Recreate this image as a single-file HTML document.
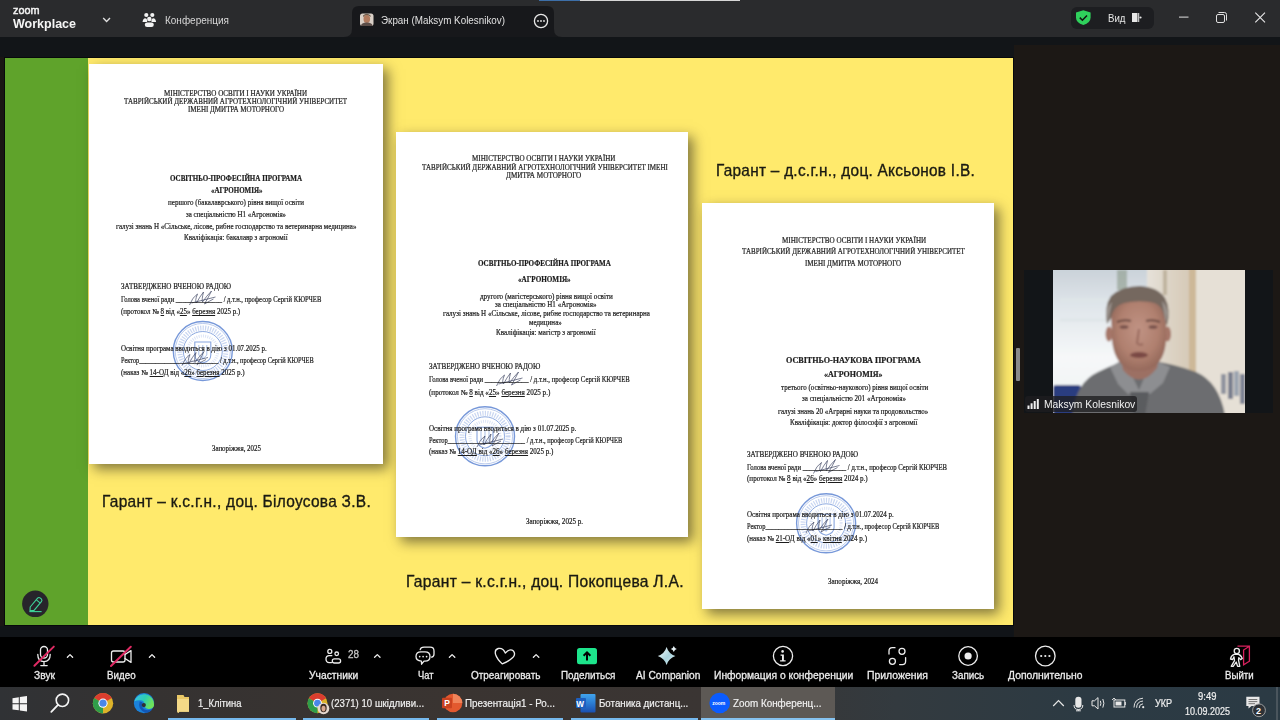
<!DOCTYPE html>
<html><head><meta charset="utf-8">
<style>
*{margin:0;padding:0;box-sizing:border-box}
html,body{width:1280px;height:720px;overflow:hidden;background:#121518;font-family:"Liberation Sans",sans-serif}
.a{position:absolute}
.t{position:absolute;white-space:pre;line-height:1;transform-origin:0 0}
.t u{text-decoration-thickness:1px;text-underline-offset:1px}
svg{position:absolute;overflow:visible}
.doc{position:absolute;background:#fff;box-shadow:5px 5px 12px rgba(45,42,30,.6)}
</style></head><body>
<!-- title bar -->
<div class="a" style="left:0;top:0;width:1280px;height:37px;background:#2a2b2d"></div>
<div class="a" style="left:539px;top:0;width:41px;height:1px;background:#3d6fa8"></div>
<div class="a" style="left:580px;top:0;width:160px;height:1px;background:#d6d6d6"></div>
<svg style="left:0;top:0" width="1280" height="37">
  <!-- chevron -->
  <path d="M103.2 18 L106.6 21.4 L110 18" fill="none" stroke="#e0e0e0" stroke-width="1.4"/>
  <!-- people icon -->
  <g fill="#f2f2f2">
    <circle cx="146.3" cy="15" r="2.1"/>
    <circle cx="152.3" cy="15" r="2.1"/>
    <circle cx="149.3" cy="19" r="2.2"/>
    <path d="M142.5 21.9 Q143 18.5 145.2 18.2 Q146.7 18.2 147.3 20.3 L147 21.9 Z"/>
    <path d="M156.1 21.9 Q155.6 18.5 153.4 18.2 Q151.9 18.2 151.3 20.3 L151.6 21.9 Z"/>
    <rect x="144.8" y="22.4" width="9" height="4.6" rx="2.3"/>
  </g>
  <!-- tab -->
  <path d="M344 37 Q352 37 352 29 L352 13 Q352 6 359 6 L547 6 Q554 6 554 13 L554 29 Q554 37 562 37 Z" fill="#17181b"/>
  <!-- avatar -->
  <rect x="360" y="13.5" width="13.5" height="12.5" rx="2.5" fill="#d9cfc6"/>
  <ellipse cx="366.8" cy="19" rx="3.3" ry="4" fill="#b07a5e"/>
  <path d="M363 17 Q366.8 12.8 370.6 17 L370.6 15.5 Q366.8 12 363 15.5Z" fill="#6d5a4a"/>
  <path d="M361 26 Q361 22.5 366.8 22.5 Q372.5 22.5 372.5 26Z" fill="#5b4d48"/>
  <!-- more -->
  <circle cx="541" cy="21" r="6.6" fill="none" stroke="#e8e8e8" stroke-width="1.3"/>
  <circle cx="538" cy="21" r="0.9" fill="#e8e8e8"/><circle cx="541" cy="21" r="0.9" fill="#e8e8e8"/><circle cx="544" cy="21" r="0.9" fill="#e8e8e8"/>
  <!-- pill -->
  <rect x="1071" y="7" width="83" height="22" rx="6" fill="#1d1e21"/>
  <path d="M1083.3 10.3 L1090.6 12.6 L1090.6 17.5 Q1090.6 22.8 1083.3 25 Q1076 22.8 1076 17.5 L1076 12.6 Z" fill="#2fd05c"/>
  <path d="M1079.8 17.6 L1082.4 20.2 L1087 15.4" fill="none" stroke="#111" stroke-width="1.5"/>
  <rect x="1132" y="13" width="5.5" height="9" fill="#e8e8e8"/>
  <rect x="1138.2" y="13" width="1" height="9" fill="#e8e8e8"/>
  <circle cx="1140.5" cy="17.5" r="1.1" fill="#e8e8e8"/>
  <!-- window controls -->
  <rect x="1179" y="16.6" width="9.5" height="1" fill="#e0e0e0"/>
  <rect x="1216.5" y="14.5" width="8" height="8" rx="1.5" fill="none" stroke="#e0e0e0" stroke-width="1"/>
  <path d="M1218.5 12.5 L1224.5 12.5 Q1226.5 12.5 1226.5 14.5 L1226.5 20.5" fill="none" stroke="#e0e0e0" stroke-width="1"/>
  <path d="M1255.3 12.6 L1265 22.3 M1265 12.6 L1255.3 22.3" stroke="#e8e8e8" stroke-width="1.1"/>
</svg>

<!-- content background -->
<div class="a" style="left:4px;top:57px;width:1010px;height:569px;background:#07090b"></div>
<div class="a" style="left:0;top:57px;width:4px;height:580px;background:#1a1614"></div>
<div class="a" style="left:1014px;top:45px;width:266px;height:592px;background:#1c1815"></div>

<!-- slide -->
<div class="a" style="left:5px;top:58px;width:1008px;height:567px;background:#ffea6c;overflow:hidden">
  <div class="a" style="left:0;top:0;width:83px;height:567px;background:#5fa32b"></div>
  <div class="doc" style="left:84px;top:6px;width:294px;height:400px"></div>
  <div class="doc" style="left:391px;top:74px;width:292px;height:405px"></div>
  <div class="doc" style="left:697px;top:145px;width:292px;height:406px"></div>
</div>
<svg style="left:0;top:0" width="1280" height="720">
  <defs>
    <g id="stamp">
      <circle r="29.5" fill="none" stroke="#5f86d2" stroke-width="1.4" opacity=".85"/>
      <circle r="27.6" fill="none" stroke="#6f92d8" stroke-width=".6" opacity=".8"/>
      <circle r="23" fill="none" stroke="#7899dc" stroke-width="5" stroke-dasharray="1.2 1.3" opacity=".4"/>
      <circle r="19.5" fill="none" stroke="#6a8fd6" stroke-width=".9" opacity=".85"/>
      <circle r="15" fill="none" stroke="#8aa6e0" stroke-width="3" stroke-dasharray="1 1.2" opacity=".3"/>
      <path d="M-8 -9 L8 -9 L8 4 Q8 10 0 12 Q-8 10 -8 4 Z" fill="none" stroke="#6a8fd6" stroke-width="1.1" opacity=".8"/>
      <path d="M-4 -6 L-4 4 L0 8 L4 4 L4 -6 M0 -6 L0 8" fill="none" stroke="#6a8fd6" stroke-width=".8" opacity=".7"/>
    </g>
    <path id="sig" d="M0 14 Q3 6 8 3 Q5 10 7 12 Q10 6 14 1 Q12 9 13 11 Q17 5 22 0 Q18 8 15 13 Q20 10 24 8 M2 12 L26 6" fill="none" stroke="#3c4260" stroke-width=".8" opacity=".85"/>
  </defs>
  <use href="#stamp" transform="translate(202.8,351)"/>
  <use href="#stamp" transform="translate(485,436.3)"/>
  <use href="#stamp" transform="translate(826.1,523.3)"/>
  <use href="#sig" transform="translate(189.5,291)"/>
  <use href="#sig" transform="translate(182,351.5)"/>
  <use href="#sig" transform="translate(496.5,372)"/>
  <use href="#sig" transform="translate(477,433)"/>
  <use href="#sig" transform="translate(813.5,459.5)"/>
  <use href="#sig" transform="translate(806,519)"/>
</svg>
<!-- pencil button -->
<svg style="left:0;top:0" width="100" height="637">
  <circle cx="35.3" cy="603.8" r="13.2" fill="#27252b"/>
  <path d="M30.2 607 L37.6 598.2 Q38.8 596.8 40.4 598.1 L41.3 598.9 Q42.6 600.2 41.4 601.6 L34 610.4 L30 610.9 Z" fill="none" stroke="#3fd49a" stroke-width="1.1"/>
  <path d="M36.4 599.8 L40 602.9" stroke="#3fd49a" stroke-width="1.1"/>
  <path d="M29.5 611.6 L41.6 611.6" stroke="#3fd49a" stroke-width="1.1"/>
</svg>

<!-- video tile -->
<div class="a" style="left:1016px;top:347.5px;width:3.5px;height:33.5px;background:#8a8a8a;border-radius:1px"></div>
<div class="a" style="left:1024px;top:270px;width:249px;height:143px;background:#121518"></div>
<svg style="left:1053px;top:270px;overflow:hidden" width="192" height="143" viewBox="1053 270 192 143">
  <defs>
    <filter id="bl" x="-5%" y="-5%" width="110%" height="110%"><feGaussianBlur stdDeviation="1.2"/></filter>
    <linearGradient id="win" x1="0" y1="0" x2="0" y2="1"><stop offset="0" stop-color="#c9d1d8"/><stop offset=".25" stop-color="#dfe5ea"/><stop offset=".6" stop-color="#f6f8f9"/><stop offset="1" stop-color="#eef1f2"/></linearGradient>
    <linearGradient id="cur" x1="0" y1="0" x2="1" y2="0"><stop offset="0" stop-color="#e6e2da"/><stop offset=".5" stop-color="#ddd4c6"/><stop offset="1" stop-color="#d6cab7"/></linearGradient>
    <radialGradient id="face" cx=".5" cy=".45" r=".6"><stop offset="0" stop-color="#c09384"/><stop offset=".6" stop-color="#b0806f"/><stop offset="1" stop-color="#8f6457"/></radialGradient>
  </defs>
  <g filter="url(#bl)">
    <rect x="1050" y="267" width="200" height="150" fill="#e5dfd5"/>
    <rect x="1050" y="267" width="97" height="150" fill="url(#win)"/>
    <rect x="1147" y="267" width="43" height="150" fill="url(#cur)"/>
    <rect x="1189" y="267" width="7" height="150" fill="#cdb898"/>
    <rect x="1196" y="267" width="52" height="150" fill="#e6e0d6"/>
    <rect x="1163" y="270" width="4" height="25" fill="#c0b49f"/>
    <path d="M1060 300 L1140 300 M1060 320 L1140 320" stroke="#dfe5e8" stroke-width="3"/>
    <rect x="1117" y="270" width="10" height="20" fill="#8a9a88" opacity=".6"/>
    <!-- bottles -->
    <rect x="1221" y="374" width="5" height="20" fill="#6b7488" opacity=".7"/>
    <rect x="1228" y="372" width="5" height="27" fill="#4a5570" opacity=".7"/>
    <rect x="1234" y="371" width="5" height="25" fill="#7a8aa0" opacity=".7"/>
    <rect x="1240" y="374" width="5" height="30" fill="#505a76" opacity=".7"/>
    <!-- chair -->
    <rect x="1053" y="385" width="28" height="30" rx="3" fill="#2c3c80"/>
    <!-- body -->
    <path d="M1072 415 Q1076 382 1098 372 Q1114 364 1124 362 L1152 361 Q1175 364 1196 372 Q1219 382 1225 415 Z" fill="#6c6d70"/>
    <path d="M1110 367 L1124 359 L1139 390 L1152 359 L1170 367 L1163 383 L1150 394 L1128 394 L1118 384 Z" fill="#8d8e91"/>
    <path d="M1130 392 L1149 392 L1145 415 L1134 415 Z" fill="#5a5b5e"/>
    <!-- neck -->
    <path d="M1120 352 L1160 352 L1157 368 Q1140 390 1123 370 Z" fill="#9c7063"/>
    <!-- ears -->
    <ellipse cx="1109" cy="334" rx="3.5" ry="7.5" fill="#a67668"/>
    <ellipse cx="1167.5" cy="334" rx="3.5" ry="7.5" fill="#a67668"/>
    <!-- face -->
    <path d="M1111 312 Q1112 297 1138 296 Q1165 297 1166 314 L1166 340 Q1165 362 1150 369 Q1139 373 1128 369 Q1114 362 1112 340 Z" fill="url(#face)"/>
    <!-- hair -->
    <path d="M1107 324 Q1104 306 1111 296 Q1122 286 1140 286 Q1158 287 1165 298 Q1171 309 1167 326 L1163 312 Q1160 303 1150 302 Q1136 300 1124 303 Q1113 306 1111 318 Z" fill="#74675e"/>
    <path d="M1108 322 L1106 312 Q1108 305 1112 302 Z M1166 324 L1168 312 Q1166 304 1162 301 Z" fill="#9a928c"/>
    <!-- eyes/brows -->
    <path d="M1117 322 Q1124 319 1131 321 M1146 321 Q1153 319 1160 322" stroke="#6a4a42" stroke-width="2" fill="none"/>
    <ellipse cx="1124" cy="327" rx="4.5" ry="1.8" fill="#76504a"/>
    <ellipse cx="1153" cy="327" rx="4.5" ry="1.8" fill="#76504a"/>
    <path d="M1139 329 L1137 343 Q1139 346 1143 344" stroke="#996a5e" stroke-width="2" fill="none"/>
    <ellipse cx="1139" cy="355" rx="9" ry="3" fill="#7a4a45"/>
  </g>
</svg>
<!-- name label -->
<div class="a" style="left:1025px;top:396px;width:112px;height:16px;background:rgba(30,30,32,.78);border-radius:3px"></div>
<svg style="left:0;top:0" width="1280" height="720">
  <g fill="#f0f0f0">
    <rect x="1027.5" y="405.5" width="2" height="3.5"/>
    <rect x="1030.6" y="403.3" width="2" height="5.7"/>
    <rect x="1033.7" y="401" width="2" height="8"/>
    <rect x="1036.8" y="399" width="2" height="10"/>
  </g>
</svg>

<!-- toolbar -->
<div class="a" style="left:0;top:626px;width:1013px;height:11px;background:#111418"></div>
<div class="a" style="left:0;top:637px;width:1280px;height:50px;background:#000"></div>
<svg style="left:0;top:637px" width="1280" height="50">
  <g fill="none" stroke="#ededed" stroke-width="1.3" stroke-linecap="round" stroke-linejoin="round">
    <!-- mic -->
    <rect x="40.5" y="9.5" width="7" height="11.5" rx="3.5"/>
    <path d="M37.8 17.5 Q37.8 24.6 44 24.6 Q50.2 24.6 50.2 17.5 M44 24.6 L44 28.6 M40.8 28.6 L47.2 28.6"/>
    <!-- video -->
    <rect x="111.5" y="14" width="13.5" height="11" rx="2"/>
    <path d="M125 17.5 L131 13.6 L131 25.4 L125 21.5"/>
    <!-- carets -->
    <path d="M67.4 20.3 L70 17.6 L72.6 20.3 M149.4 20.3 L152 17.6 L154.6 20.3 M374.6 20.3 L377.3 17.6 L380 20.3 M449.4 20.3 L452.1 17.6 L454.8 20.3 M533.4 20.3 L536.1 17.6 L538.8 20.3"/>
    <!-- participants -->
    <circle cx="329.8" cy="14.4" r="2"/>
    <circle cx="336.7" cy="16.8" r="1.8"/>
    <path d="M331.8 18.7 L329.2 18.7 Q326 18.7 326 22.1 Q326 25.6 329.2 25.6 L331.6 25.6"/>
    <rect x="332.3" y="21.9" width="8.3" height="4.1" rx="2.05"/>
    <!-- chat -->
    <path d="M420.2 12.6 Q420.6 10.2 424 10.2 L430.2 10.2 Q434 10.2 434 14 L434 17.2 Q434 19.6 431.6 20.2"/>
    <path d="M421 14.8 L425 14.8 Q430 14.8 430 19.5 Q430 24.2 425 24.2 L424 24.2 L421.6 27.2 L421.4 24.1 Q416 23.6 416 19.5 Q416 14.8 421 14.8 Z"/>
    <!-- heart -->
    <path d="M505.3 16 Q503 10.5 498.2 11.5 Q494.3 12.6 495.6 17.5 Q497 22 502.2 26.9 Q508.5 24.6 512.8 20.6 Q516 17.2 513.4 14 Q510 11 505.3 16 Z"/>
    <!-- info -->
    <circle cx="783" cy="19" r="9.6"/>
    <!-- apps -->
    <path d="M889 17 L889 14 Q889 10.7 892.3 10.7 L895 10.7 M905.6 20.6 L905.6 24.3 Q905.6 27.6 902.3 27.6 L899.6 27.6"/>
    <circle cx="902" cy="14.3" r="3"/>
    <circle cx="892.4" cy="24.3" r="3"/>
    <!-- record -->
    <circle cx="968.1" cy="19" r="9.3"/>
    <!-- more -->
    <circle cx="1045.3" cy="19" r="9.8"/>
    <!-- exit person -->
    <circle cx="1236.8" cy="14" r="2.6"/>
    <path d="M1234.2 17.4 Q1231 18.5 1230.5 22 L1232.6 22.5 L1234 19.8 L1234.5 23.7 L1231.2 29.3 L1233.2 29.3 L1236.2 25 L1237.6 29.3 L1239.8 29.3 L1238.5 23 L1238.8 20.6 L1240.6 22.6 L1242.3 21.4 Q1240.5 17.3 1236.8 17 Z"/>
  </g>
  <!-- red slashes -->
  <path d="M34.4 28.8 L53.8 9.6 M111 29 L130.8 9.8" stroke="#df2a63" stroke-width="2" stroke-linecap="round"/>
  <!-- info i -->
  <g fill="#ededed">
    <circle cx="782.6" cy="14.4" r="1.3"/>
    <path d="M780.6 17.4 L783.9 17.4 L783.9 23.2 L785.6 23.2 L785.6 24.6 L780.1 24.6 L780.1 23.2 L782 23.2 L782 18.7 L780.6 18.7 Z"/>
    <circle cx="968.1" cy="19" r="3.6"/>
    <circle cx="1041.2" cy="19" r="1.1"/><circle cx="1045.3" cy="19" r="1.1"/><circle cx="1049.4" cy="19" r="1.1"/>
    <circle cx="426.6" cy="19.6" r="0.85"/><circle cx="423.1" cy="19.6" r="0.85"/><circle cx="419.7" cy="19.6" r="0.85"/>
  </g>
  <!-- share -->
  <rect x="577" y="11" width="20" height="16.2" rx="2.5" fill="#1de58c"/>
  <path d="M587 23.4 L587 16 M583.6 18.8 L587 15.4 L590.4 18.8" fill="none" stroke="#000" stroke-width="2"/>
  <!-- AI star -->
  <defs><linearGradient id="ai" x1="0" y1="0" x2="1" y2="1"><stop offset="0" stop-color="#ffffff"/><stop offset=".55" stop-color="#a9d3dd"/><stop offset="1" stop-color="#e0f0f4"/></linearGradient></defs>
  <path d="M666.6 9.9 Q668.6 16.6 675.4 19 Q668.6 21.4 666.6 28 Q664.6 21.4 657.8 19 Q664.6 16.6 666.6 9.9 Z" fill="url(#ai)"/>
  <path d="M673.8 9 Q674.6 11.3 676.8 12 Q674.6 12.7 673.8 15 Q673 12.7 670.8 12 Q673 11.3 673.8 9 Z" fill="#e8f3f7"/>
  <!-- exit door -->
  <path d="M1237.5 9.2 L1249.4 9.2 L1249.4 24.2 L1243.6 27.8 L1243.6 13 L1249.4 9.2" fill="none" stroke="#d8215d" stroke-width="1.3"/>
</svg>

<!-- taskbar -->
<div class="a" style="left:0;top:687px;width:1280px;height:33px;background:linear-gradient(90deg,#303235 0%,#353231 12%,#3a3431 35%,#3a3533 55%,#333a3f 70%,#2c3a43 85%,#2b3a44 100%)"></div>
<div class="a" style="left:701px;top:687px;width:134px;height:33px;background:#5d5955"></div>
<div class="a" style="left:168px;top:717.8px;width:127.6px;height:2.2px;background:#76b9ed"></div>
<div class="a" style="left:302.5px;top:717.8px;width:126.3px;height:2.2px;background:#76b9ed"></div>
<div class="a" style="left:437px;top:717.8px;width:126px;height:2.2px;background:#76b9ed"></div>
<div class="a" style="left:571px;top:717.8px;width:126.5px;height:2.2px;background:#76b9ed"></div>
<div class="a" style="left:701px;top:717.8px;width:134px;height:2.2px;background:#86c3f0"></div>
<svg style="left:0;top:687px" width="1280" height="33">
  <!-- windows logo -->
  <g fill="#f4f4f4">
    <path d="M12.5 11.2 L18.8 10.3 L18.8 16.3 L12.5 16.3Z"/>
    <path d="M19.8 10.1 L27 9 L27 16.3 L19.8 16.3Z"/>
    <path d="M12.5 17.3 L18.8 17.3 L18.8 23.3 L12.5 22.4Z"/>
    <path d="M19.8 17.3 L27 17.3 L27 24.4 L19.8 23.5Z"/>
  </g>
  <!-- search -->
  <circle cx="62.4" cy="13.3" r="6.2" fill="none" stroke="#f4f4f4" stroke-width="1.6"/>
  <path d="M58 17.8 L51.3 24.8" stroke="#f4f4f4" stroke-width="1.8" stroke-linecap="round"/>
  <!-- chrome -->
  <g transform="translate(103,16.2)">
    <circle r="10.2" fill="#ddb32a"/>
    <path d="M0 0 L-8.8 -5.1 A10.2 10.2 0 0 1 8.8 -5.1 Z" fill="#db3d2f"/>
    <path d="M0 0 L-8.8 -5.1 A10.2 10.2 0 0 0 0 10.2 Z" fill="#2f9d4a"/>
    <circle r="4.6" fill="#fff"/><circle r="3.6" fill="#4a86e8"/>
  </g>
  <!-- edge -->
  <defs><linearGradient id="eg" x1="0" y1="0" x2="1" y2=".4"><stop offset="0" stop-color="#3fc0ef"/><stop offset=".55" stop-color="#2ccdb4"/><stop offset="1" stop-color="#6ee35a"/></linearGradient></defs>
  <g transform="translate(144,16.1)">
    <circle r="10.2" fill="#1b82da"/>
    <path d="M-9.9 -1.5 A10.2 10.2 0 0 1 10.1 1.8 Q9.5 5.8 4.5 5.8 Q0.2 5.8 0.6 2 Q0.8 -2.6 -4 -2.8 Q-7.8 -2.8 -9.9 -1.5 Z" fill="url(#eg)"/>
    <path d="M-4.3 -1.6 Q-6.8 5.8 1 9.6 Q6 10.2 8.6 5.4 Q5 8 0.5 6.5 Q-3 4.5 -1.6 -0.8 Z" fill="#1257b6"/>
    <circle cx="-0.2" cy="2" r="2.1" fill="#2f2f33"/>
  </g>
  <!-- folder -->
  <path d="M177 8 L183.5 8 L184.5 10 L189 10 L189 24.8 L179.5 24.8 L178 26 L177 24 Z" fill="#e9c866"/>
  <path d="M177 12 L189 12 L189 24.8 L179.5 24.8 L178 26 L177 24 Z" fill="#f4d987"/>
  <!-- chrome + avatar -->
  <g transform="translate(317.5,16.2)">
    <circle r="10" fill="#ddb32a"/>
    <path d="M0 0 L-8.6 -5 A10 10 0 0 1 8.6 -5 Z" fill="#db3d2f"/>
    <path d="M0 0 L-8.6 -5 A10 10 0 0 0 0 10 Z" fill="#2f9d4a"/>
    <circle r="4.4" fill="#fff"/><circle r="3.4" fill="#4a86e8"/>
  </g>
  <circle cx="323.5" cy="21.5" r="5.8" fill="#e6d9d0"/>
  <ellipse cx="323.5" cy="21" rx="3.2" ry="4.2" fill="#3a2a22"/>
  <ellipse cx="323.5" cy="21.6" rx="2" ry="2.8" fill="#d8a890"/>
  <!-- powerpoint -->
  <circle cx="453" cy="16" r="9.3" fill="#e3592f"/>
  <path d="M453 6.7 A9.3 9.3 0 0 1 462.3 16 L453 16Z" fill="#f0845a"/>
  <rect x="442" y="10.8" width="10" height="10.4" rx="1" fill="#c94220"/>
  <text x="444.3" y="19.2" font-family="Liberation Sans" font-weight="700" font-size="8.5" fill="#fff">P</text>
  <!-- word -->
  <defs><linearGradient id="wg" x1="0" y1="0" x2="0" y2="1"><stop offset="0" stop-color="#41a5ee"/><stop offset=".5" stop-color="#2b7cd3"/><stop offset="1" stop-color="#1a4fb0"/></linearGradient></defs>
  <rect x="580.5" y="7" width="15" height="18.5" rx="1" fill="url(#wg)"/>
  <rect x="576" y="11" width="10" height="10" rx="1" fill="#1d5fbf"/>
  <text x="576.3" y="19.8" font-family="Liberation Sans" font-weight="700" font-size="8.2" fill="#fff">W</text>
  <!-- zoom -->
  <circle cx="719.7" cy="16" r="10.3" fill="#0b5cff"/>
  <text x="712.2" y="17.6" font-family="Liberation Sans" font-weight="700" font-size="5" fill="#fff">zoom</text>
  <!-- tray -->
  <path d="M1053.2 19 L1058.5 13.7 L1063.8 19" fill="none" stroke="#e8e8e8" stroke-width="1.2"/>
  <rect x="1075.3" y="9.8" width="6.2" height="11" rx="3" fill="#e8e8e8"/>
  <path d="M1074 18 Q1074 22.5 1078.4 22.5 Q1082.8 22.5 1082.8 18 M1078.4 22.5 L1078.4 23.8 M1076 23.8 L1080.8 23.8" fill="none" stroke="#e8e8e8" stroke-width="1"/>
  <path d="M1092 13.8 L1094.5 13.8 L1098 10.6 L1098 22 L1094.5 18.8 L1092 18.8 Z" fill="none" stroke="#e8e8e8" stroke-width="1"/>
  <path d="M1100.3 13.8 Q1101.6 16.3 1100.3 18.8 M1102.8 12 Q1105 16.3 1102.8 20.6" fill="none" stroke="#e8e8e8" stroke-width="1"/>
  <rect x="1114" y="13" width="10.8" height="7" fill="none" stroke="#e8e8e8" stroke-width="1"/>
  <rect x="1115.5" y="14.5" width="6" height="4" fill="#e8e8e8"/>
  <rect x="1124.8" y="15" width="1" height="3" fill="#e8e8e8"/>
  <path d="M1112 13 L1114 11 L1116 13" fill="none" stroke="#e8e8e8" stroke-width="0.9"/>
  <path d="M1134 20.5 Q1134 12 1143 11.2 M1136.6 20.8 Q1136.6 14.6 1143 14 M1139.2 21 Q1139.2 17 1143 16.8" fill="none" stroke="#e0e0e0" stroke-width="1"/>
  <circle cx="1143.2" cy="20.2" r="1.1" fill="#e8e8e8"/>
  <!-- notification -->
  <path d="M1246.3 9.8 L1259.5 9.8 L1259.5 19 L1251.5 19 L1248.5 21.5 L1248.5 19 L1246.3 19 Z" fill="#e8e8e8"/>
  <path d="M1248.5 12.5 L1257.3 12.5 M1248.5 14.6 L1257.3 14.6 M1248.5 16.7 L1255 16.7" stroke="#555" stroke-width="0.8"/>
  <circle cx="1259" cy="23.3" r="6.4" fill="#2d3136" stroke="#aaa" stroke-width="0.9"/>
  <text x="1256" y="26.6" font-family="Liberation Sans" font-weight="700" font-size="9" fill="#fff">2</text>
  <rect x="1276.5" y="0" width="1" height="33" fill="#6b7177"/>
</svg>
<div class="t" style="left:13.00px;top:5.47px;font-family:'Liberation Sans';font-size:11.500px;font-weight:400;color:#f2f2f2;transform:scaleX(0.9422) translateZ(0);-webkit-text-stroke:0.5px #f2f2f2;">zoom</div>
<div class="t" style="left:13.00px;top:16.83px;font-family:'Liberation Sans';font-size:13.200px;font-weight:700;color:#f5f5f5;transform:scaleX(0.9480) translateZ(0);">Workplace</div>
<div class="t" style="left:165.00px;top:14.67px;font-family:'Liberation Sans';font-size:11.500px;font-weight:400;color:#d8d8d8;transform:scaleX(0.8685) translateZ(0);">Конференция</div>
<div class="t" style="left:381.00px;top:14.67px;font-family:'Liberation Sans';font-size:11.500px;font-weight:400;color:#e0e0e0;transform:scaleX(0.8556) translateZ(0);">Экран (Maksym Kolesnikov)</div>
<div class="t" style="left:1108.00px;top:12.69px;font-family:'Liberation Sans';font-size:11.000px;font-weight:400;color:#e6e6e6;transform:scaleX(0.8791) translateZ(0);">Вид</div>
<div class="t" style="left:33.50px;top:670.46px;font-family:'Liberation Sans';font-size:10.800px;font-weight:400;color:#ececec;transform:scaleX(0.9478) translateZ(0);-webkit-text-stroke:0.3px #ececec;">Звук</div>
<div class="t" style="left:107.00px;top:670.46px;font-family:'Liberation Sans';font-size:10.800px;font-weight:400;color:#ececec;transform:scaleX(0.9066) translateZ(0);-webkit-text-stroke:0.3px #ececec;">Видео</div>
<div class="t" style="left:308.70px;top:670.46px;font-family:'Liberation Sans';font-size:10.800px;font-weight:400;color:#ececec;transform:scaleX(0.9555) translateZ(0);-webkit-text-stroke:0.3px #ececec;">Участники</div>
<div class="t" style="left:347.50px;top:649.31px;font-family:'Liberation Sans';font-size:10.500px;font-weight:400;color:#c4c4c4;transform:scaleX(0.9412) translateZ(0);-webkit-text-stroke:0.3px #c4c4c4;">28</div>
<div class="t" style="left:417.50px;top:670.46px;font-family:'Liberation Sans';font-size:10.800px;font-weight:400;color:#ececec;transform:scaleX(0.8649) translateZ(0);-webkit-text-stroke:0.3px #ececec;">Чат</div>
<div class="t" style="left:470.60px;top:670.46px;font-family:'Liberation Sans';font-size:10.800px;font-weight:400;color:#ececec;transform:scaleX(0.9217) translateZ(0);-webkit-text-stroke:0.3px #ececec;">Отреагировать</div>
<div class="t" style="left:560.60px;top:670.46px;font-family:'Liberation Sans';font-size:10.800px;font-weight:400;color:#ececec;transform:scaleX(0.9124) translateZ(0);-webkit-text-stroke:0.3px #ececec;">Поделиться</div>
<div class="t" style="left:635.60px;top:670.46px;font-family:'Liberation Sans';font-size:10.800px;font-weight:400;color:#ececec;transform:scaleX(0.9412) translateZ(0);-webkit-text-stroke:0.3px #ececec;">AI Companion</div>
<div class="t" style="left:713.70px;top:670.46px;font-family:'Liberation Sans';font-size:10.800px;font-weight:400;color:#ececec;transform:scaleX(0.9539) translateZ(0);-webkit-text-stroke:0.3px #ececec;">Информация о конференции</div>
<div class="t" style="left:867.00px;top:670.46px;font-family:'Liberation Sans';font-size:10.800px;font-weight:400;color:#ececec;transform:scaleX(0.9656) translateZ(0);-webkit-text-stroke:0.3px #ececec;">Приложения</div>
<div class="t" style="left:951.50px;top:670.46px;font-family:'Liberation Sans';font-size:10.800px;font-weight:400;color:#ececec;transform:scaleX(0.9086) translateZ(0);-webkit-text-stroke:0.3px #ececec;">Запись</div>
<div class="t" style="left:1008.00px;top:670.46px;font-family:'Liberation Sans';font-size:10.800px;font-weight:400;color:#ececec;transform:scaleX(0.9586) translateZ(0);-webkit-text-stroke:0.3px #ececec;">Дополнительно</div>
<div class="t" style="left:1225.00px;top:670.46px;font-family:'Liberation Sans';font-size:10.800px;font-weight:400;color:#ececec;transform:scaleX(0.8973) translateZ(0);-webkit-text-stroke:0.3px #ececec;">Выйти</div>
<div class="t" style="left:197.50px;top:697.77px;font-family:'Liberation Sans';font-size:11.500px;font-weight:400;color:#f0f0f0;transform:scaleX(0.8176) translateZ(0);-webkit-text-stroke:0.2px #f0f0f0;">1_Клітина</div>
<div class="t" style="left:330.60px;top:697.77px;font-family:'Liberation Sans';font-size:11.500px;font-weight:400;color:#f0f0f0;transform:scaleX(0.8372) translateZ(0);-webkit-text-stroke:0.2px #f0f0f0;">(2371) 10 шкідливи...</div>
<div class="t" style="left:465.00px;top:697.77px;font-family:'Liberation Sans';font-size:11.500px;font-weight:400;color:#f0f0f0;transform:scaleX(0.8542) translateZ(0);-webkit-text-stroke:0.2px #f0f0f0;">Презентація1 - Ро...</div>
<div class="t" style="left:598.70px;top:697.77px;font-family:'Liberation Sans';font-size:11.500px;font-weight:400;color:#f0f0f0;transform:scaleX(0.8438) translateZ(0);-webkit-text-stroke:0.2px #f0f0f0;">Ботаника дистанц...</div>
<div class="t" style="left:732.50px;top:697.77px;font-family:'Liberation Sans';font-size:11.500px;font-weight:400;color:#f0f0f0;transform:scaleX(0.8574) translateZ(0);-webkit-text-stroke:0.2px #f0f0f0;">Zoom Конференц...</div>
<div class="t" style="left:1154.80px;top:698.19px;font-family:'Liberation Sans';font-size:11.000px;font-weight:400;color:#f0f0f0;transform:scaleX(0.8295) translateZ(0);-webkit-text-stroke:0.2px #f0f0f0;">УКР</div>
<div class="t" style="left:1197.60px;top:690.89px;font-family:'Liberation Sans';font-size:11.000px;font-weight:400;color:#f0f0f0;transform:scaleX(0.8589) translateZ(0);-webkit-text-stroke:0.2px #f0f0f0;">9:49</div>
<div class="t" style="left:1185.40px;top:705.89px;font-family:'Liberation Sans';font-size:11.000px;font-weight:400;color:#f0f0f0;transform:scaleX(0.8173) translateZ(0);-webkit-text-stroke:0.2px #f0f0f0;">10.09.2025</div>
<div class="t" style="left:1043.70px;top:399.22px;font-family:'Liberation Sans';font-size:11.200px;font-weight:400;color:#f2f2f2;transform:scaleX(0.9235) translateZ(0);">Maksym Kolesnikov</div>
<div class="t" style="left:102.00px;top:492.92px;font-family:'Liberation Sans';font-size:16.400px;font-weight:400;color:#1a1a12;transform:scaleX(0.9435) translateZ(0);-webkit-text-stroke:0.35px #1a1a12;letter-spacing:0.3px;">Гарант – к.с.г.н., доц. Білоусова З.В.</div>
<div class="t" style="left:716.00px;top:162.32px;font-family:'Liberation Sans';font-size:16.400px;font-weight:400;color:#1a1a12;transform:scaleX(0.9362) translateZ(0);-webkit-text-stroke:0.35px #1a1a12;letter-spacing:0.3px;">Гарант – д.с.г.н., доц. Аксьонов І.В.</div>
<div class="t" style="left:405.70px;top:572.72px;font-family:'Liberation Sans';font-size:16.400px;font-weight:400;color:#1a1a12;transform:scaleX(0.9516) translateZ(0);-webkit-text-stroke:0.35px #1a1a12;letter-spacing:0.3px;">Гарант – к.с.г.н., доц. Покопцева Л.А.</div>
<div class="t" style="left:163.90px;top:90.14px;font-family:'Liberation Serif';font-size:7.350px;font-weight:400;color:#1c1c1c;transform:scaleX(0.9634) translateZ(0);-webkit-text-stroke:0.2px #1c1c1c;">МІНІСТЕРСТВО ОСВІТИ І НАУКИ УКРАЇНИ</div>
<div class="t" style="left:124.00px;top:98.04px;font-family:'Liberation Serif';font-size:7.350px;font-weight:400;color:#1c1c1c;transform:scaleX(0.9543) translateZ(0);-webkit-text-stroke:0.2px #1c1c1c;">ТАВРІЙСЬКИЙ ДЕРЖАВНИЙ АГРОТЕХНОЛОГІЧНИЙ УНІВЕРСИТЕТ</div>
<div class="t" style="left:188.00px;top:106.34px;font-family:'Liberation Serif';font-size:7.350px;font-weight:400;color:#1c1c1c;transform:scaleX(0.9576) translateZ(0);-webkit-text-stroke:0.2px #1c1c1c;">ІМЕНІ ДМИТРА МОТОРНОГО</div>
<div class="t" style="left:169.90px;top:175.14px;font-family:'Liberation Serif';font-size:7.350px;font-weight:700;color:#1c1c1c;transform:scaleX(0.9584) translateZ(0);-webkit-text-stroke:0.2px #1c1c1c;">ОСВІТНЬО-ПРОФЕСІЙНА ПРОГРАМА</div>
<div class="t" style="left:210.50px;top:186.84px;font-family:'Liberation Serif';font-size:7.350px;font-weight:700;color:#1c1c1c;transform:scaleX(0.9536) translateZ(0);-webkit-text-stroke:0.2px #1c1c1c;">«АГРОНОМІЯ»</div>
<div class="t" style="left:168.00px;top:199.44px;font-family:'Liberation Serif';font-size:7.350px;font-weight:400;color:#1c1c1c;transform:scaleX(0.9593) translateZ(0);-webkit-text-stroke:0.2px #1c1c1c;">першого (бакалаврського) рівня вищої освіти</div>
<div class="t" style="left:185.60px;top:211.24px;font-family:'Liberation Serif';font-size:7.350px;font-weight:400;color:#1c1c1c;transform:scaleX(0.9455) translateZ(0);-webkit-text-stroke:0.2px #1c1c1c;">за спеціальністю Н1 «Агрономія»</div>
<div class="t" style="left:115.70px;top:222.84px;font-family:'Liberation Serif';font-size:7.350px;font-weight:400;color:#1c1c1c;transform:scaleX(0.9569) translateZ(0);-webkit-text-stroke:0.2px #1c1c1c;">галузі знань Н «Сільське, лісове, рибне господарство та ветеринарна медицина»</div>
<div class="t" style="left:184.00px;top:234.04px;font-family:'Liberation Serif';font-size:7.350px;font-weight:400;color:#1c1c1c;transform:scaleX(0.9578) translateZ(0);-webkit-text-stroke:0.2px #1c1c1c;">Кваліфікація: бакалавр з агрономії</div>
<div class="t" style="left:121.30px;top:283.14px;font-family:'Liberation Serif';font-size:7.350px;font-weight:400;color:#1c1c1c;transform:scaleX(0.9627) translateZ(0);-webkit-text-stroke:0.2px #1c1c1c;">ЗАТВЕРДЖЕНО ВЧЕНОЮ РАДОЮ</div>
<div class="t" style="left:121.30px;top:296.24px;font-family:'Liberation Serif';font-size:7.350px;font-weight:400;color:#1c1c1c;transform:scaleX(0.8982) translateZ(0);-webkit-text-stroke:0.2px #1c1c1c;">Голова вченої ради ______________ / д.т.н., професор Сергій КЮРЧЕВ</div>
<div class="t" style="left:121.30px;top:308.44px;font-family:'Liberation Serif';font-size:7.350px;font-weight:400;color:#1c1c1c;transform:scaleX(0.9528) translateZ(0);-webkit-text-stroke:0.2px #1c1c1c;">(протокол № <u>8</u> від «<u>25</u>» <u>березня</u> 2025 р.)</div>
<div class="t" style="left:121.30px;top:344.54px;font-family:'Liberation Serif';font-size:7.350px;font-weight:400;color:#1c1c1c;transform:scaleX(0.9466) translateZ(0);-webkit-text-stroke:0.2px #1c1c1c;">Освітня програма вводиться в дію з 01.07.2025 р.</div>
<div class="t" style="left:121.30px;top:357.44px;font-family:'Liberation Serif';font-size:7.350px;font-weight:400;color:#1c1c1c;transform:scaleX(0.8620) translateZ(0);-webkit-text-stroke:0.2px #1c1c1c;">Ректор_________________________ / д.т.н., професор Сергій КЮРЧЕВ</div>
<div class="t" style="left:121.30px;top:368.84px;font-family:'Liberation Serif';font-size:7.350px;font-weight:400;color:#1c1c1c;transform:scaleX(0.9545) translateZ(0);-webkit-text-stroke:0.2px #1c1c1c;">(наказ № <u>14-ОД</u> від «<u>26</u>» <u>березня</u> 2025 р.)</div>
<div class="t" style="left:211.50px;top:444.54px;font-family:'Liberation Serif';font-size:7.350px;font-weight:400;color:#1c1c1c;transform:scaleX(0.9396) translateZ(0);-webkit-text-stroke:0.2px #1c1c1c;">Запоріжжя, 2025</div>
<div class="t" style="left:472.20px;top:155.34px;font-family:'Liberation Serif';font-size:7.350px;font-weight:400;color:#1c1c1c;transform:scaleX(0.9661) translateZ(0);-webkit-text-stroke:0.2px #1c1c1c;">МІНІСТЕРСТВО ОСВІТИ І НАУКИ УКРАЇНИ</div>
<div class="t" style="left:421.60px;top:163.74px;font-family:'Liberation Serif';font-size:7.350px;font-weight:400;color:#1c1c1c;transform:scaleX(0.9575) translateZ(0);-webkit-text-stroke:0.2px #1c1c1c;">ТАВРІЙСЬКИЙ ДЕРЖАВНИЙ АГРОТЕХНОЛОГІЧНИЙ УНІВЕРСИТЕТ ІМЕНІ</div>
<div class="t" style="left:506.00px;top:171.54px;font-family:'Liberation Serif';font-size:7.350px;font-weight:400;color:#1c1c1c;transform:scaleX(0.9754) translateZ(0);-webkit-text-stroke:0.2px #1c1c1c;">ДМИТРА МОТОРНОГО</div>
<div class="t" style="left:477.60px;top:260.44px;font-family:'Liberation Serif';font-size:7.350px;font-weight:700;color:#1c1c1c;transform:scaleX(0.9635) translateZ(0);-webkit-text-stroke:0.2px #1c1c1c;">ОСВІТНЬО-ПРОФЕСІЙНА ПРОГРАМА</div>
<div class="t" style="left:517.70px;top:276.04px;font-family:'Liberation Serif';font-size:7.350px;font-weight:700;color:#1c1c1c;transform:scaleX(0.9758) translateZ(0);-webkit-text-stroke:0.2px #1c1c1c;">«АГРОНОМІЯ»</div>
<div class="t" style="left:479.60px;top:292.64px;font-family:'Liberation Serif';font-size:7.350px;font-weight:400;color:#1c1c1c;transform:scaleX(0.9656) translateZ(0);-webkit-text-stroke:0.2px #1c1c1c;">другого (магістерського) рівня вищої освіти</div>
<div class="t" style="left:495.20px;top:301.44px;font-family:'Liberation Serif';font-size:7.350px;font-weight:400;color:#1c1c1c;transform:scaleX(0.9587) translateZ(0);-webkit-text-stroke:0.2px #1c1c1c;">за спеціальністю Н1 «Агрономія»</div>
<div class="t" style="left:442.50px;top:310.24px;font-family:'Liberation Serif';font-size:7.350px;font-weight:400;color:#1c1c1c;transform:scaleX(0.9614) translateZ(0);-webkit-text-stroke:0.2px #1c1c1c;">галузі знань Н «Сільське, лісове, рибне господарство та ветеринарна</div>
<div class="t" style="left:529.40px;top:319.04px;font-family:'Liberation Serif';font-size:7.350px;font-weight:400;color:#1c1c1c;transform:scaleX(0.9587) translateZ(0);-webkit-text-stroke:0.2px #1c1c1c;">медицина»</div>
<div class="t" style="left:496.20px;top:329.34px;font-family:'Liberation Serif';font-size:7.350px;font-weight:400;color:#1c1c1c;transform:scaleX(0.9617) translateZ(0);-webkit-text-stroke:0.2px #1c1c1c;">Кваліфікація: магістр з агрономії</div>
<div class="t" style="left:428.70px;top:363.34px;font-family:'Liberation Serif';font-size:7.350px;font-weight:400;color:#1c1c1c;transform:scaleX(0.9732) translateZ(0);-webkit-text-stroke:0.2px #1c1c1c;">ЗАТВЕРДЖЕНО ВЧЕНОЮ РАДОЮ</div>
<div class="t" style="left:428.70px;top:375.84px;font-family:'Liberation Serif';font-size:7.350px;font-weight:400;color:#1c1c1c;transform:scaleX(0.9155) translateZ(0);-webkit-text-stroke:0.2px #1c1c1c;">Голова вченої ради _____________ / д.т.н., професор Сергій КЮРЧЕВ</div>
<div class="t" style="left:428.70px;top:388.84px;font-family:'Liberation Serif';font-size:7.350px;font-weight:400;color:#1c1c1c;transform:scaleX(0.9696) translateZ(0);-webkit-text-stroke:0.2px #1c1c1c;">(протокол № <u>8</u> від «<u>25</u>» <u>березня</u> 2025 р.)</div>
<div class="t" style="left:428.70px;top:424.54px;font-family:'Liberation Serif';font-size:7.350px;font-weight:400;color:#1c1c1c;transform:scaleX(0.9570) translateZ(0);-webkit-text-stroke:0.2px #1c1c1c;">Освітня програма вводиться в дію з 01.07.2025 р.</div>
<div class="t" style="left:428.70px;top:436.84px;font-family:'Liberation Serif';font-size:7.350px;font-weight:400;color:#1c1c1c;transform:scaleX(0.8792) translateZ(0);-webkit-text-stroke:0.2px #1c1c1c;">Ректор________________________ / д.т.н., професор Сергій КЮРЧЕВ</div>
<div class="t" style="left:428.70px;top:448.34px;font-family:'Liberation Serif';font-size:7.350px;font-weight:400;color:#1c1c1c;transform:scaleX(0.9592) translateZ(0);-webkit-text-stroke:0.2px #1c1c1c;">(наказ № <u>14-ОД</u> від «<u>26</u>» <u>березня</u> 2025 р.)</div>
<div class="t" style="left:526.00px;top:517.54px;font-family:'Liberation Serif';font-size:7.350px;font-weight:400;color:#1c1c1c;transform:scaleX(0.9598) translateZ(0);-webkit-text-stroke:0.2px #1c1c1c;">Запоріжжя, 2025 р.</div>
<div class="t" style="left:782.00px;top:236.74px;font-family:'Liberation Serif';font-size:7.350px;font-weight:400;color:#1c1c1c;transform:scaleX(0.9708) translateZ(0);-webkit-text-stroke:0.2px #1c1c1c;">МІНІСТЕРСТВО ОСВІТИ І НАУКИ УКРАЇНИ</div>
<div class="t" style="left:742.00px;top:248.34px;font-family:'Liberation Serif';font-size:7.350px;font-weight:400;color:#1c1c1c;transform:scaleX(0.9535) translateZ(0);-webkit-text-stroke:0.2px #1c1c1c;">ТАВРІЙСЬКИЙ ДЕРЖАВНИЙ АГРОТЕХНОЛОГІЧНИЙ УНІВЕРСИТЕТ</div>
<div class="t" style="left:805.00px;top:260.44px;font-family:'Liberation Serif';font-size:7.350px;font-weight:400;color:#1c1c1c;transform:scaleX(0.9596) translateZ(0);-webkit-text-stroke:0.2px #1c1c1c;">ІМЕНІ ДМИТРА МОТОРНОГО</div>
<div class="t" style="left:785.90px;top:357.24px;font-family:'Liberation Serif';font-size:7.350px;font-weight:700;color:#1c1c1c;transform:scaleX(1.1054) translateZ(0);-webkit-text-stroke:0.2px #1c1c1c;">ОСВІТНЬО-НАУКОВА ПРОГРАМА</div>
<div class="t" style="left:823.70px;top:370.74px;font-family:'Liberation Serif';font-size:7.350px;font-weight:700;color:#1c1c1c;transform:scaleX(1.0832) translateZ(0);-webkit-text-stroke:0.2px #1c1c1c;">«АГРОНОМІЯ»</div>
<div class="t" style="left:780.60px;top:383.84px;font-family:'Liberation Serif';font-size:7.350px;font-weight:400;color:#1c1c1c;transform:scaleX(0.9534) translateZ(0);-webkit-text-stroke:0.2px #1c1c1c;">третього (освітньо-наукового) рівня вищої освіти</div>
<div class="t" style="left:802.20px;top:395.44px;font-family:'Liberation Serif';font-size:7.350px;font-weight:400;color:#1c1c1c;transform:scaleX(0.9638) translateZ(0);-webkit-text-stroke:0.2px #1c1c1c;">за спеціальністю 201 «Агрономія»</div>
<div class="t" style="left:778.40px;top:407.84px;font-family:'Liberation Serif';font-size:7.350px;font-weight:400;color:#1c1c1c;transform:scaleX(0.9563) translateZ(0);-webkit-text-stroke:0.2px #1c1c1c;">галузі знань 20 «Аграрні науки та продовольство»</div>
<div class="t" style="left:790.40px;top:419.04px;font-family:'Liberation Serif';font-size:7.350px;font-weight:400;color:#1c1c1c;transform:scaleX(0.9537) translateZ(0);-webkit-text-stroke:0.2px #1c1c1c;">Кваліфікація: доктор філософії з агрономії</div>
<div class="t" style="left:747.20px;top:451.14px;font-family:'Liberation Serif';font-size:7.350px;font-weight:400;color:#1c1c1c;transform:scaleX(0.9715) translateZ(0);-webkit-text-stroke:0.2px #1c1c1c;">ЗАТВЕРДЖЕНО ВЧЕНОЮ РАДОЮ</div>
<div class="t" style="left:747.20px;top:463.84px;font-family:'Liberation Serif';font-size:7.350px;font-weight:400;color:#1c1c1c;transform:scaleX(0.9118) translateZ(0);-webkit-text-stroke:0.2px #1c1c1c;">Голова вченої ради _____________ / д.т.н., професор Сергій КЮРЧЕВ</div>
<div class="t" style="left:747.20px;top:474.94px;font-family:'Liberation Serif';font-size:7.350px;font-weight:400;color:#1c1c1c;transform:scaleX(0.9648) translateZ(0);-webkit-text-stroke:0.2px #1c1c1c;">(протокол № <u>8</u> від «<u>26</u>» <u>березня</u> 2024 р.)</div>
<div class="t" style="left:747.20px;top:510.54px;font-family:'Liberation Serif';font-size:7.350px;font-weight:400;color:#1c1c1c;transform:scaleX(0.9531) translateZ(0);-webkit-text-stroke:0.2px #1c1c1c;">Освітня програма вводиться в дію з 01.07.2024 р.</div>
<div class="t" style="left:747.20px;top:523.44px;font-family:'Liberation Serif';font-size:7.350px;font-weight:400;color:#1c1c1c;transform:scaleX(0.8742) translateZ(0);-webkit-text-stroke:0.2px #1c1c1c;">Ректор________________________ / д.т.н., професор Сергій КЮРЧЕВ</div>
<div class="t" style="left:747.20px;top:534.84px;font-family:'Liberation Serif';font-size:7.350px;font-weight:400;color:#1c1c1c;transform:scaleX(0.9595) translateZ(0);-webkit-text-stroke:0.2px #1c1c1c;">(наказ № <u>21-ОД</u> від «<u>01</u>» <u>квітня</u> 2024 р.)</div>
<div class="t" style="left:828.30px;top:577.84px;font-family:'Liberation Serif';font-size:7.350px;font-weight:400;color:#1c1c1c;transform:scaleX(0.9608) translateZ(0);-webkit-text-stroke:0.2px #1c1c1c;">Запоріжжя, 2024</div></body></html>
